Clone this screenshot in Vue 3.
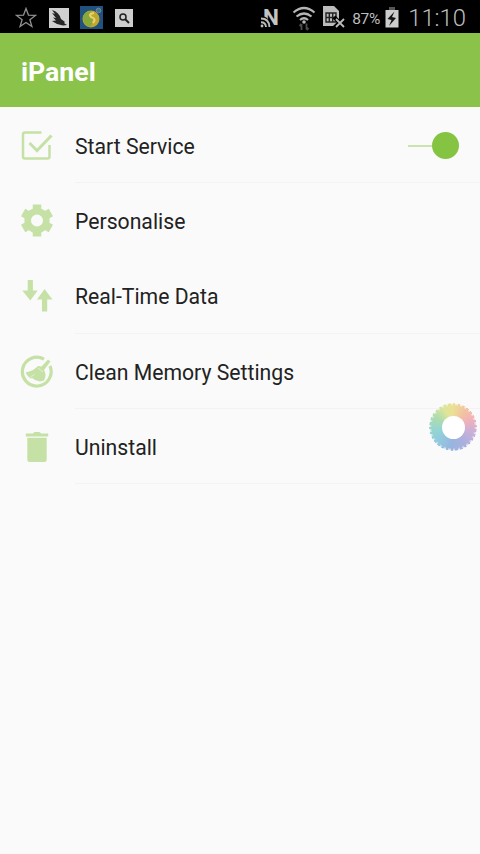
<script setup>
import { ref } from 'vue'

const enabled = ref(true)
const items = [
  { icon: 'check', label: 'Start Service', toggle: true, line: true },
  { icon: 'gear', label: 'Personalise', line: false },
  { icon: 'arrows', label: 'Real-Time Data', line: true },
  { icon: 'clean', label: 'Clean Memory Settings', line: true },
  { icon: 'trash', label: 'Uninstall', line: true },
]
</script>

<template>
  <div class="screen">
    <div class="status">
      <div class="left">
        <svg width="22" height="22" viewBox="0 0 22 22" fill="none" stroke="#929292" stroke-width="1.3">
          <path d="M11 1.500l2.500 6.700 7 .2-5.600 4.300 2 6.800-5.900-4-5.900 4 2-6.800L1.500 8.400l7-.2z" />
        </svg>
        <svg class="bird" width="20" height="20" viewBox="0 0 20 20">
          <rect width="20" height="20" fill="#d0d0d0" />
          <path d="M3 2q7 2 9 9l4 3-1 1 3 2-4 .5-6-1.500-5-3 4-.5-3-3 3 .5-4-5 3 1z" fill="#252525" />
        </svg>
        <svg class="globe" width="23" height="23" viewBox="0 0 23 23">
          <rect width="23" height="23" fill="#20517f" />
          <circle cx="11" cy="13" r="8.500" fill="#c0a72f" />
          <path d="M3 11q2-6 8-6-3 4 1 6 5 2 0 4 1 4-3 6-6-3-6-10" fill="#89a83a" />
          <path d="M14 7q-6 1-3 4 6 2 2 6" fill="none" stroke="#e9d36a" stroke-width="2.200" />
          <circle cx="18.500" cy="4.500" r="2.300" fill="#48718f" stroke="#6d8c9d" />
        </svg>
        <svg class="find" width="18" height="18" viewBox="0 0 18 18">
          <rect width="18" height="18" fill="#cdcdcd" />
          <circle cx="8" cy="8" r="3" fill="none" stroke="#202020" stroke-width="1.500" />
          <path d="M10 10l4 4" stroke="#202020" stroke-width="2" />
        </svg>
      </div>
      <div class="right">
        <svg class="nfc" width="22" height="33" viewBox="0 -4 22 33">
          <text class="nfc-letter" x="3" y="20.500">N</text>
          <path d="M0 12h3q7.500 2 8 12H0z" fill="#000" />
          <g fill="none" stroke="#bababa" stroke-width="1.900">
            <path d="M1 14.500q8 0 8.500 8.500M1 18.300q4.700 0 5 4.700" />
          </g>
          <circle cx="2" cy="22" r="1.400" fill="#bababa" />
        </svg>
        <svg class="wifi" width="24" height="26" viewBox="0 0 24 26">
          <g fill="none" stroke="#b5b5b5" stroke-width="2.200">
            <path d="M1.500 7.500Q12-1.500 22.500 7.500M4.500 11.500q7.500-6 15 0M8 15q4-3.500 8 0" />
          </g>
          <circle cx="12" cy="17" r="1.800" fill="#b5b5b5" />
          <path d="M9.500 25v-6M7.500 21l2-2M14.500 18.500v6M14.500 25l2-2" stroke="#4b4b4b" stroke-width="1.800" />
        </svg>
        <svg class="sim" width="23" height="24" viewBox="0 0 23 24">
          <path d="M1 1h11l5 5v15H1z" fill="#bcbcbc" />
          <path d="M4 8h10v9H4zM7.300 8v9M10.700 8v9M4 12.500h10" fill="none" stroke="#222" stroke-width="1.400" />
          <path d="M12 12l11 11M23 12L12 23" stroke="#000" stroke-width="4" />
          <path d="M14 14l8 8M22 14l-8 8" stroke="#bcbcbc" stroke-width="1.800" />
        </svg>
        <span class="percent">87%</span>
        <svg class="battery" width="14" height="21" viewBox="0 0 14 21">
          <path d="M4 0h6v3H4z" fill="#555" />
          <path d="M.5 3h13v17.500H.5z" fill="#cdcdcd" />
          <path d="M9.500 4.500L2.500 12l4 1-2.500 6 7-8-4-1z" fill="#151515" />
        </svg>
        <span class="time">11:10</span>
      </div>
    </div>

    <header class="bar">iPanel</header>

    <main class="list">
      <div v-for="item in items" :key="item.label" class="row">
        <svg class="icon" width="36" height="36" viewBox="0 0 36 36">
          <g v-if="item.icon === 'check'" fill="none" stroke="#c6e1a6" stroke-width="2.500">
            <path d="M22.500 4.500H6Q4 4.500 4 6.500v22Q4 30.500 6 30.500h22.500q2 0 2-2V17" />
            <path d="M10.500 15l7.500 7.500L32.500 7.500" stroke-width="3" />
          </g>
          <g v-else-if="item.icon === 'gear'" fill="none" stroke="#c6e1a6">
            <circle cx="18" cy="17.500" r="9.300" stroke-width="6.600" />
            <path transform="translate(0 -.5)" d="M18 2v5M18 29v5M4.140 10l4.330 2.500M27.530 23.500l4.330 2.500M4.140 26l4.330-2.500M27.530 12.500l4.330-2.500" stroke-width="8.500" />
          </g>
          <path
            v-else-if="item.icon === 'arrows'"
            fill="#c6e1a6"
            d="M8.700 2h5.200v10.500h4.800L11.300 22.500 3.300 12.500h5.400zM23 33.500h5.200V21.500h5.200L25.600 11 18 21.500h5z"
          />
          <g v-else-if="item.icon === 'clean'">
            <path d="M25 5.200A14.400 14.400 0 1 0 31 12" fill="none" stroke="#c6e1a6" stroke-width="3.200" />
            <path d="M29 5.500l2.500 2-6.500 8.500q3 4.500 0 10.500l-4 1q-5-.5-8-3.500l-1.500.5q-3-2-5-6 8-1.500 12.500-6.500l3.500.5z" fill="#c6e1a6" />
            <path d="M11.500 23l4-2.500M19 14l5 4" stroke="#e2f0d3" stroke-width="1" />
          </g>
          <path
            v-else
            fill="#c6e1a6"
            d="M6.800 4.500h7L15.500 3h5L22.200 4.500h7v3H6.800zM8.300 8.800h19.400v21.700q0 2.500-2.500 2.500H10.800q-2.500 0-2.500-2.500z"
          />
        </svg>
        <div class="cell" :class="{ line: item.line }">
          <span class="label">{{ item.label }}</span>
          <button v-if="item.toggle" class="toggle" :class="{ off: !enabled }" @click="enabled = !enabled">
            <i class="track"></i><i class="thumb"></i>
          </button>
        </div>
      </div>
    </main>

    <div class="wheel"></div>
  </div>
</template>

<style>
body {
  background: #fafafa;
}
</style>

<style scoped>
.screen {
  position: relative;
  width: 480px;
  height: 854px;
  overflow: hidden;
  background: #fafafa;
  font-family: Roboto, sans-serif;
}
.status {
  display: flex;
  justify-content: space-between;
  height: 33px;
  padding: 0 14px 0 15px;
  background: #000;
}
.left,
.right {
  display: flex;
  align-items: center;
}
.left {
  padding-top: 2px;
}
.bird {
  margin-left: 12px;
}
.globe {
  margin-left: 11px;
}
.find {
  margin-left: 12px;
}
.right {
  color: #bebebe;
}
.nfc-letter {
  font: 700 22.5px Roboto, sans-serif;
  fill: #c4c4c4;
}
.wifi {
  margin: 2px 0 0 10px;
}
.sim {
  margin: 0 0 0 6px;
}
.percent {
  width: 30px;
  margin: 4px 0 0 7px;
  font-size: 15.5px;
  letter-spacing: -0.3px;
}
.battery {
  margin: 1px 0 0 3px;
}
.time {
  margin: 4px 0 0 9px;
  font-size: 23.8px;
  font-weight: 300;
  line-height: 29px;
}
.bar {
  display: flex;
  align-items: center;
  box-sizing: border-box;
  height: 74px;
  padding: 3px 0 0 21px;
  background: #8bc34a;
  color: #fff;
  font-size: 26.67px;
  font-weight: 700;
}
.list {
  display: flex;
  flex-direction: column;
  padding-top: 1px;
}
.row {
  display: flex;
  align-items: center;
  height: 75.3px;
  padding-left: 19px;
}
.icon {
  flex: none;
}
.cell {
  display: flex;
  flex: 1;
  align-items: center;
  justify-content: space-between;
  box-sizing: border-box;
  height: 100%;
  margin-left: 20px;
  padding: 1px 21px 0 0;
  border-bottom: 1px solid transparent;
  color: #222;
  font-size: 21.2px;
}
.label {
  padding-top: 1px;
}
.line {
  border-bottom-color: #f3f3f3;
}
.toggle {
  display: flex;
  align-items: center;
  width: 51px;
  padding: 0;
  border: 0;
  background: none;
}
.toggle.off {
  flex-direction: row-reverse;
}
.track {
  flex: 1;
  height: 2px;
  background: #cbe3ae;
}
.thumb {
  width: 27px;
  height: 27px;
  border-radius: 50%;
  background: #84c442;
}
.wheel {
  position: absolute;
  top: 403px;
  left: 429px;
  width: 48px;
  height: 48px;
  border-radius: 50%;
  background: conic-gradient(#ecdf94, #f3c0a2 40deg, #efb1bb 70deg, #c9b0d8 105deg, #aab0de 145deg, #98b5df 185deg, #93c9df 225deg, #94d5d2 260deg, #afdcae 300deg, #dde59a 335deg, #ecdf94);
  mask: radial-gradient(circle, #000 21px, transparent 24px), repeating-conic-gradient(#000 0 6deg, transparent 6deg 12deg);
}
.wheel::after {
  content: '';
  position: absolute;
  inset: 12.5px;
  border-radius: 50%;
  background: #fff;
}
</style>
